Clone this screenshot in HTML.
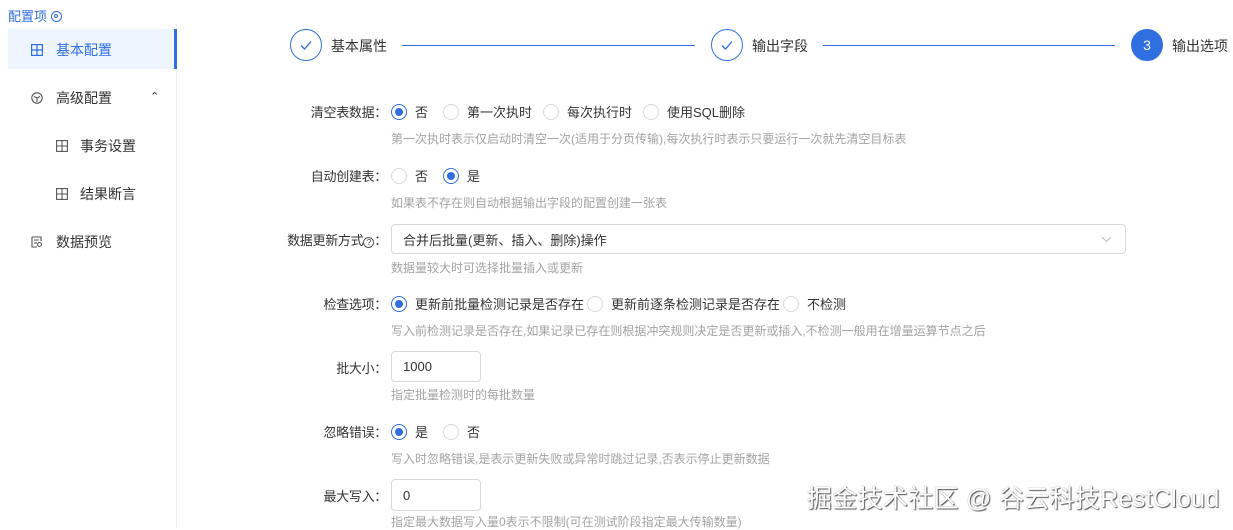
<!DOCTYPE html>
<html><head><meta charset="utf-8"><style>
*{margin:0;padding:0;box-sizing:border-box}
body{width:1233px;height:528px;overflow:hidden;background:#fff;font-family:"Liberation Sans","Noto Sans CJK SC",sans-serif;color:#333;position:relative}
.a{position:absolute;white-space:nowrap}
.lbl{font-size:13px;color:#333;text-align:right;width:200px;letter-spacing:-0.3px}
.help{font-size:12px;color:#a3a3a3}
.r{position:absolute;width:16px;height:16px;border:1px solid #d9d9d9;border-radius:50%;background:#fff;margin-top:1px}
.r.on{border-color:#2f6fe0}
.r.on::after{content:"";position:absolute;left:3px;top:3px;width:8px;height:8px;border-radius:50%;background:#2f6fe0}
.t{font-size:13px;color:#333;margin-top:-1px}
.box{position:absolute;border:1px solid #d9d9d9;border-radius:4px;background:#fff;font-size:13px;color:#333;padding-left:11px;display:flex;align-items:center}
.mi{font-size:14px;color:#333}
.step{position:absolute;width:32px;height:32px;border:1px solid #2f6fe0;border-radius:50%}
.line{position:absolute;height:1px;background:#2f6fe0;top:45px}
</style></head><body>
<div class="a" style="left:8px;top:6px;font-size:13px;color:#2f6fe0">配置项 <span style="display:inline-block;width:11px;height:11px;border:1.5px solid #2f6fe0;border-radius:50%;position:relative;top:1px"><span style="position:absolute;left:2px;top:2px;width:4px;height:4px;border:1.2px solid #2f6fe0;border-radius:50%"></span></span></div>
<div class="a" style="left:176px;top:24px;width:1px;height:504px;background:#eee"></div>
<div class="a" style="left:8px;top:29px;width:169px;height:40px;background:#eef5ff;border-right:3px solid #2f6fe0"></div>
<svg class="a" style="left:31px;top:44px" width="12" height="12" viewBox="0 0 12 12" fill="none" stroke="#2f6fe0" stroke-width="1.2"><rect x="0.6" y="0.6" width="10.8" height="10.8"/><path d="M6 0.6V11.4M0.6 6H11.4"/></svg>
<div class="a mi" style="left:56px;top:40px;color:#2f6fe0">基本配置</div>
<svg class="a" style="left:31px;top:92px" width="12" height="12" viewBox="0 0 12 12" fill="none" stroke="#555" stroke-width="1.1"><circle cx="6" cy="6" r="5.2"/><path d="M3 4.5L6 6 9 4.5M6 6V10"/></svg>
<div class="a mi" style="left:56px;top:88px">高级配置</div>
<div class="a" style="left:150px;top:90px;font-size:11px;color:#333">&#8963;</div>
<svg class="a" style="left:56px;top:140px" width="12" height="12" viewBox="0 0 12 12" fill="none" stroke="#555" stroke-width="1.1"><rect x="0.6" y="0.6" width="10.8" height="10.8"/><path d="M6 0.6V11.4M0.6 6H11.4"/></svg>
<div class="a mi" style="left:80px;top:136px">事务设置</div>
<svg class="a" style="left:56px;top:188px" width="12" height="12" viewBox="0 0 12 12" fill="none" stroke="#555" stroke-width="1.1"><rect x="0.6" y="0.6" width="10.8" height="10.8"/><path d="M6 0.6V11.4M0.6 6H11.4"/></svg>
<div class="a mi" style="left:80px;top:184px">结果断言</div>
<svg class="a" style="left:31px;top:236px" width="12" height="12" viewBox="0 0 12 12" fill="none" stroke="#555" stroke-width="1.1"><path d="M1 1H10V5M1 1V11H6M3 4H8M3 7H6"/><circle cx="8.5" cy="8.5" r="2"/></svg>
<div class="a mi" style="left:56px;top:232px">数据预览</div>

<div class="step" style="left:290px;top:29px"></div>
<svg class="a" style="left:299px;top:38px" width="14" height="14" viewBox="0 0 14 14" fill="none" stroke="#2f6fe0" stroke-width="1.3"><path d="M2 7.5L5.5 11 12 3.5"/></svg>
<div class="a" style="left:331px;top:36px;font-size:14px">基本属性</div>
<div class="line" style="left:402px;width:293px"></div>
<div class="step" style="left:711px;top:29px"></div>
<svg class="a" style="left:720px;top:38px" width="14" height="14" viewBox="0 0 14 14" fill="none" stroke="#2f6fe0" stroke-width="1.3"><path d="M2 7.5L5.5 11 12 3.5"/></svg>
<div class="a" style="left:752px;top:36px;font-size:14px">输出字段</div>
<div class="line" style="left:823px;width:292px"></div>
<div class="step" style="left:1131px;top:29px;background:#2f6fe0;color:#fff;font-size:14px;text-align:center;line-height:30px">3</div>
<div class="a" style="left:1172px;top:36px;font-size:14px">输出选项</div>

<div class="a lbl" style="left:187px;top:102px">清空表数据：</div>
<div class="r on" style="left:391px;top:103px"></div><div class="a t" style="left:415px;top:103px">否</div>
<div class="r" style="left:443px;top:103px"></div><div class="a t" style="left:467px;top:103px">第一次执时</div>
<div class="r" style="left:543px;top:103px"></div><div class="a t" style="left:567px;top:103px">每次执行时</div>
<div class="r" style="left:643px;top:103px"></div><div class="a t" style="left:667px;top:103px">使用SQL删除</div>
<div class="a help" style="left:391px;top:130px">第一次执时表示仅启动时清空一次(适用于分页传输),每次执行时表示只要运行一次就先清空目标表</div>

<div class="a lbl" style="left:187px;top:166px">自动创建表：</div>
<div class="r" style="left:391px;top:167px"></div><div class="a t" style="left:415px;top:167px">否</div>
<div class="r on" style="left:443px;top:167px"></div><div class="a t" style="left:467px;top:167px">是</div>
<div class="a help" style="left:391px;top:194px">如果表不存在则自动根据输出字段的配置创建一张表</div>

<div class="a lbl" style="left:187px;top:230px">数据更新方式<span style="display:inline-block;width:11px;height:11px;border:1px solid #555;border-radius:50%;font-size:8px;line-height:9px;text-align:center;vertical-align:0">?</span>：</div>
<div class="box" style="left:391px;top:224px;width:735px;height:30px">合并后批量(更新、插入、删除)操作</div>
<svg class="a" style="left:1101px;top:235px" width="11" height="8" viewBox="0 0 11 8" fill="none" stroke="#bbb" stroke-width="1"><path d="M1 2L5.5 6.5 10 2"/></svg>
<div class="a help" style="left:391px;top:259px">数据量较大时可选择批量插入或更新</div>

<div class="a lbl" style="left:187px;top:294px">检查选项：</div>
<div class="r on" style="left:391px;top:295px"></div><div class="a t" style="left:415px;top:295px">更新前批量检测记录是否存在</div>
<div class="r" style="left:587px;top:295px"></div><div class="a t" style="left:611px;top:295px">更新前逐条检测记录是否存在</div>
<div class="r" style="left:783px;top:295px"></div><div class="a t" style="left:807px;top:295px">不检测</div>
<div class="a help" style="left:391px;top:322px">写入前检测记录是否存在,如果记录已存在则根据冲突规则决定是否更新或插入,不检测一般用在增量运算节点之后</div>

<div class="a lbl" style="left:187px;top:358px">批大小：</div>
<div class="box" style="left:391px;top:351px;width:90px;height:31px">1000</div>
<div class="a help" style="left:391px;top:386px">指定批量检测时的每批数量</div>

<div class="a lbl" style="left:187px;top:422px">忽略错误：</div>
<div class="r on" style="left:391px;top:423px"></div><div class="a t" style="left:415px;top:423px">是</div>
<div class="r" style="left:443px;top:423px"></div><div class="a t" style="left:467px;top:423px">否</div>
<div class="a help" style="left:391px;top:450px">写入时忽略错误,是表示更新失败或异常时跳过记录,否表示停止更新数据</div>

<div class="a lbl" style="left:187px;top:486px">最大写入：</div>
<div class="box" style="left:391px;top:479px;width:90px;height:32px">0</div>
<div class="a help" style="left:391px;top:513px">指定最大数据写入量0表示不限制(可在测试阶段指定最大传输数量)</div>

<div class="a" style="left:807px;top:479px;font-size:25px;letter-spacing:0.3px;color:#fff;text-shadow:1px 1px 1px #555,0 0 1px #777">掘金技术社区 @ 谷云科技RestCloud</div>
</body></html>
